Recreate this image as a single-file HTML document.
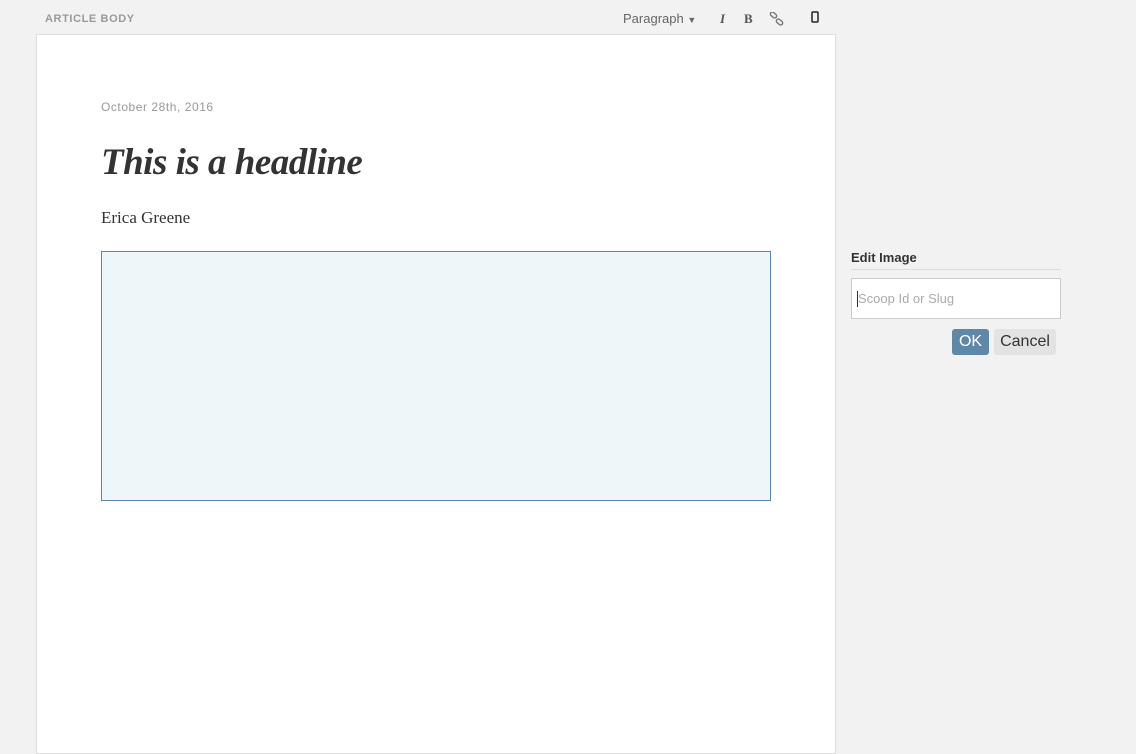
<!DOCTYPE html>
<html><head><meta charset="utf-8"><style>
*{margin:0;padding:0;box-sizing:border-box}
body{width:1136px;height:741px;background:#f2f2f2;position:relative;overflow:hidden;font-family:"Liberation Sans",sans-serif}
.lbl{position:absolute;left:45px;top:13px;font-size:11px;font-weight:bold;color:#999;letter-spacing:.6px}
.tb{position:absolute;top:11px;font-size:13px;color:#666}
.page{position:absolute;left:36px;top:34px;width:800px;height:720px;background:#fff;border:1px solid #ddd}
.date{position:absolute;left:101px;top:100px;font-size:12px;color:#999;letter-spacing:.55px}
h1{position:absolute;left:101px;top:141px;font-family:"Liberation Serif",serif;font-style:italic;font-weight:bold;font-size:37px;color:#333;letter-spacing:-.5px}
.by{position:absolute;left:101px;top:208px;font-family:"Liberation Serif",serif;font-size:17px;color:#333}
.img{position:absolute;left:101px;top:251px;width:670px;height:250px;background:#eff6f9;border:1px solid #5b85b1}
.ei{position:absolute;left:851px;top:250px;width:210px;font-size:13px;font-weight:bold;color:#333;border-bottom:1px solid #ddd;padding-bottom:4px}
.in{position:absolute;left:851px;top:278px;width:210px;height:41px;background:#fff;border:1px solid #ccc;font-size:13px;color:#aaa;padding:12px 0 0 6px}
.in:before{content:"";position:absolute;left:5px;top:12px;width:1px;height:16px;background:#333}
.ok{position:absolute;left:952px;top:329px;width:37px;height:26px;background:#5f88a8;color:#fff;border-radius:3px;font-size:16px;text-align:center;line-height:26px}
.cn{position:absolute;left:994px;top:329px;width:62px;height:26px;background:#e3e3e3;color:#333;border-radius:3px;font-size:16px;text-align:center;line-height:26px}
</style></head><body>
<div class="lbl">ARTICLE BODY</div>
<div class="tb" style="left:623px">Paragraph <span style="font-size:9px">&#9660;</span></div>
<div class="tb" style="left:720px;font-family:'Liberation Serif',serif;font-style:italic;font-weight:bold;color:#555">I</div>
<div class="tb" style="left:744px;font-family:'Liberation Serif',serif;font-weight:bold;color:#555">B</div>
<svg style="position:absolute;left:769px;top:12px" width="16" height="14" viewBox="0 0 16 14"><g fill="none" stroke="#777" stroke-width="1.4"><rect x="1" y="1" width="7" height="4" rx="2" transform="rotate(40 4.5 3)"/><rect x="7" y="8" width="7" height="4" rx="2" transform="rotate(40 10.5 10)"/></g></svg>
<svg style="position:absolute;left:811px;top:11px" width="8" height="12"><rect x="1" y="1" width="6" height="10" rx="1" fill="none" stroke="#222" stroke-width="1.5"/></svg>
<div class="page"></div>
<div class="date">October 28th, 2016</div>
<h1>This is a headline</h1>
<div class="by">Erica Greene</div>
<div class="img"></div>
<div class="ei">Edit Image</div>
<div class="in">Scoop Id or Slug</div>
<div class="ok">OK</div>
<div class="cn">Cancel</div>
</body></html>
